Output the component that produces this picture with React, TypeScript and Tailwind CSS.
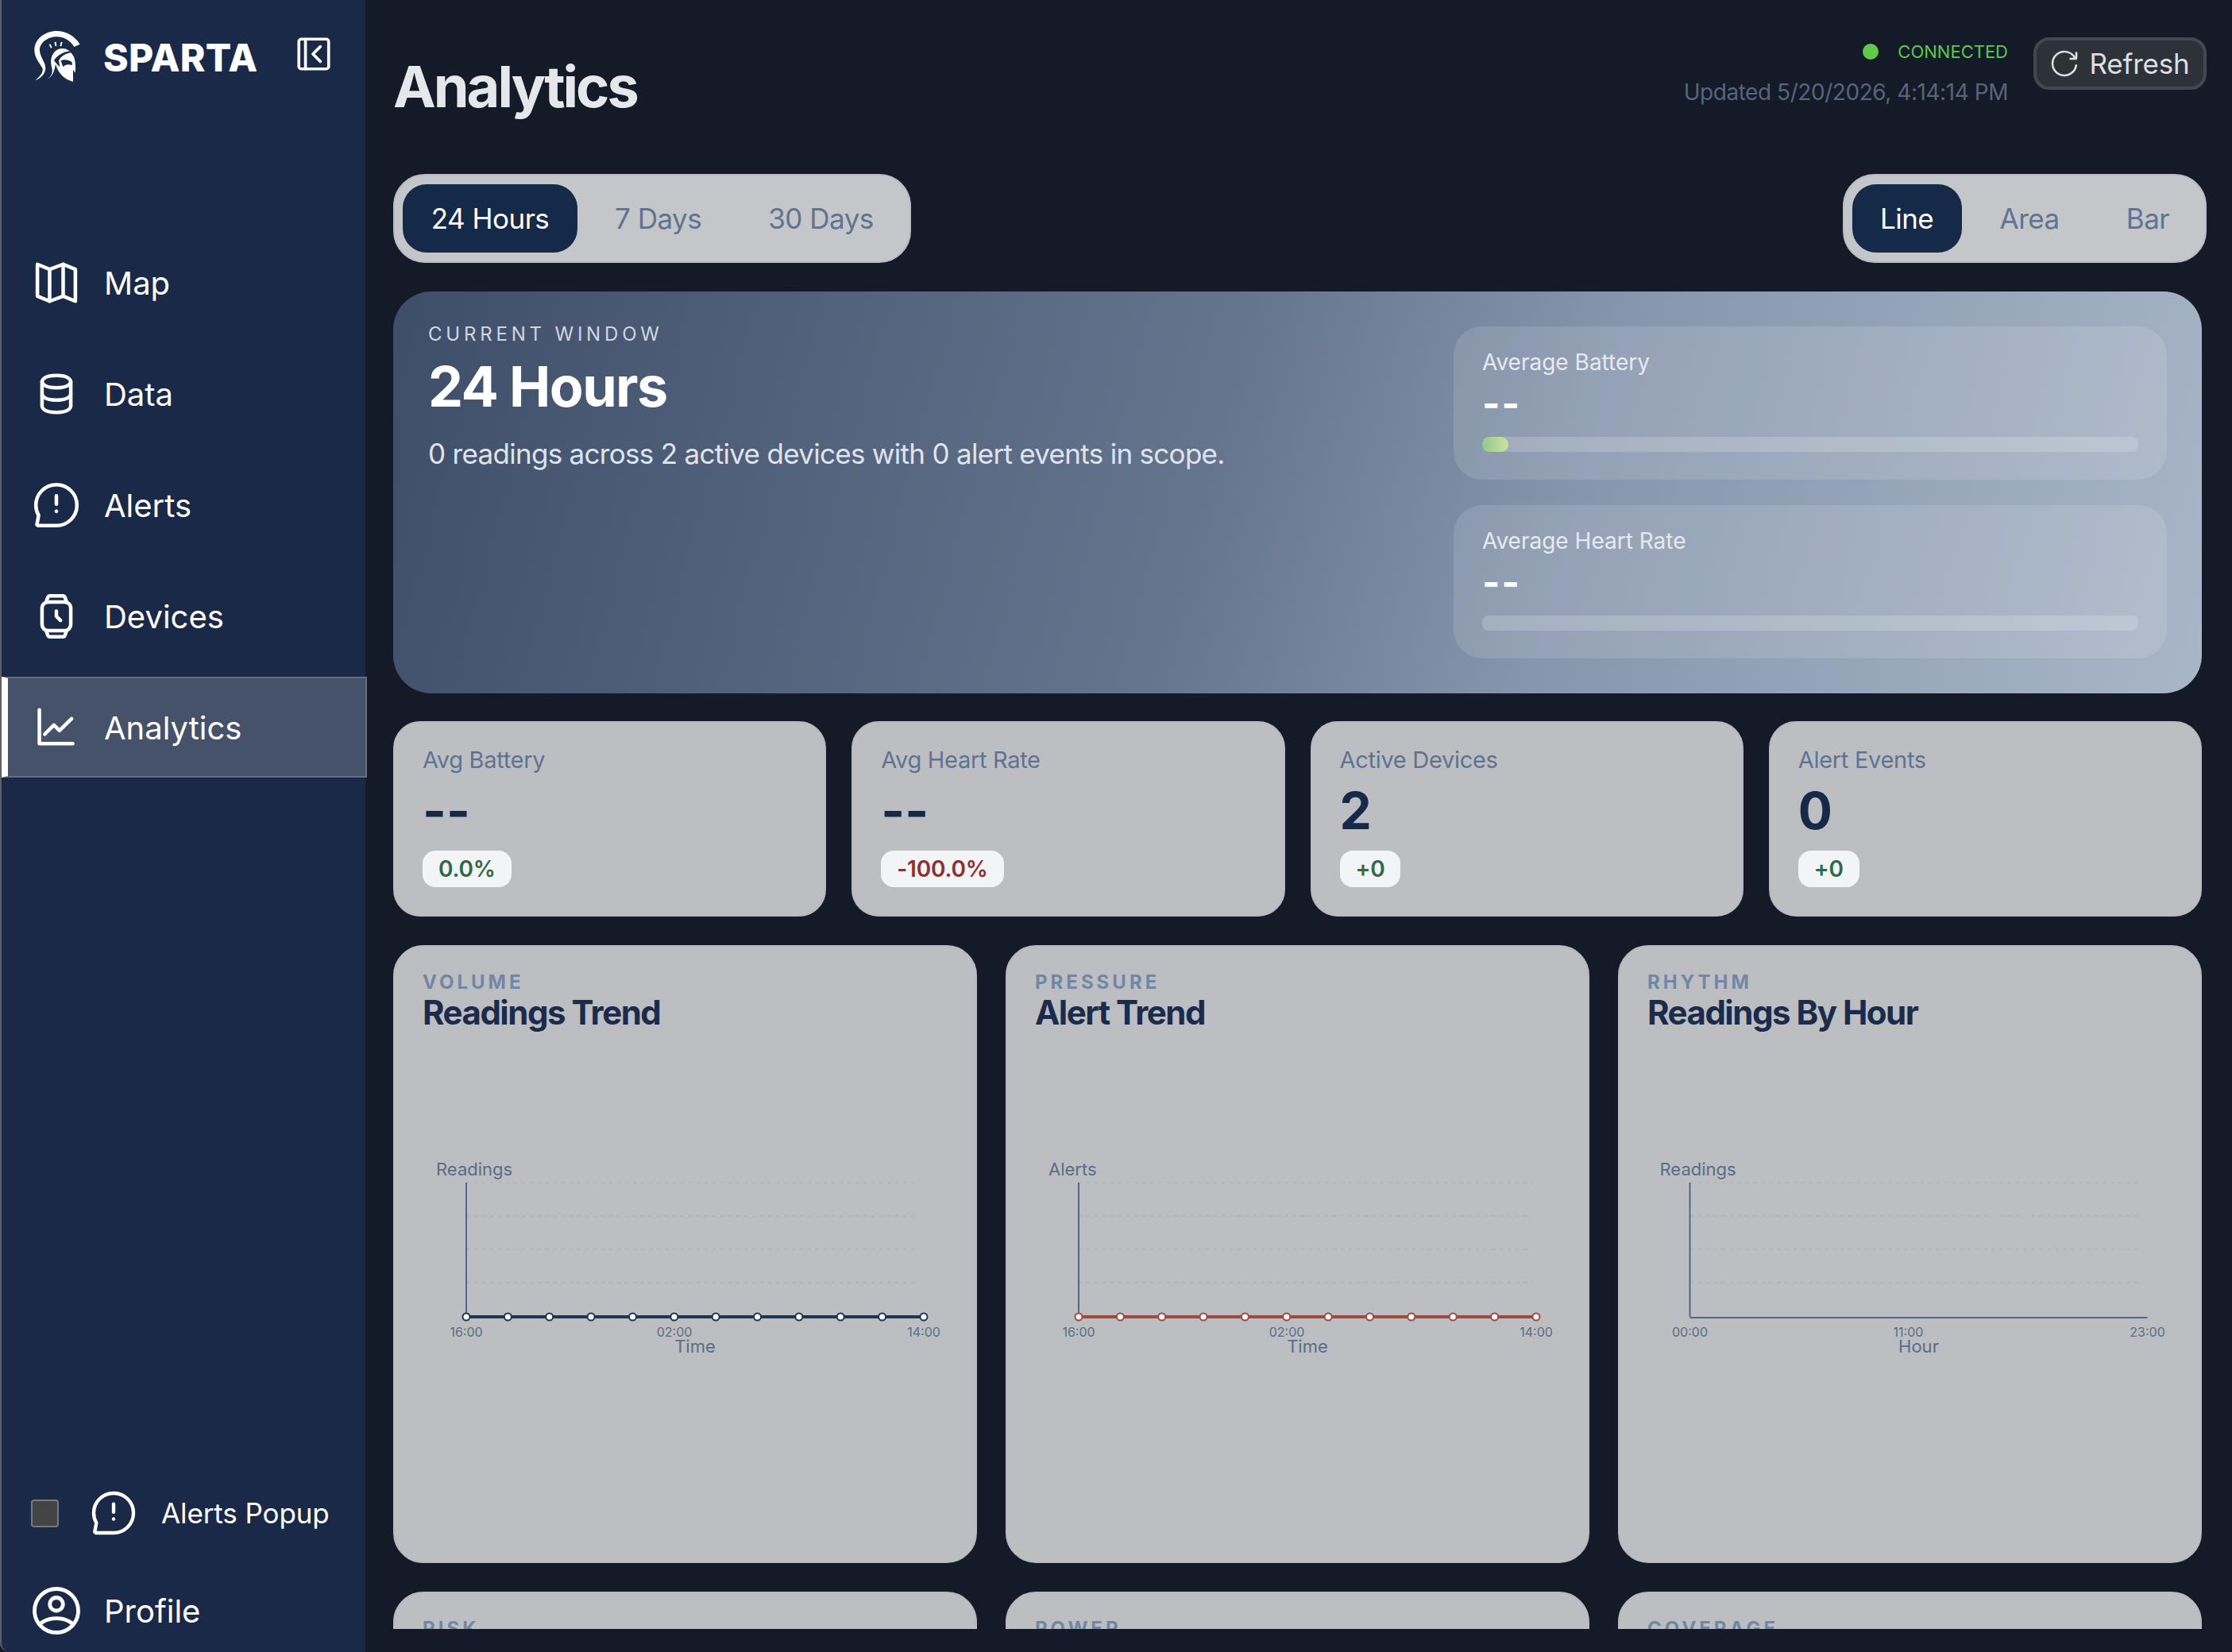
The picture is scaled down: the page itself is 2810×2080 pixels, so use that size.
import React from "react";

const Stroke = ({ className, children }: { className: string; children: React.ReactNode }) => (
  <svg viewBox="0 0 24 24" fill="none" stroke="currentColor" strokeWidth={1.75} strokeLinecap="round" strokeLinejoin="round" className={className}>
    {children}
  </svg>
);

const MapIcon = () => (
  <Stroke className="w-[62px] h-[62px]">
    <path d="M2.75 3L8.7 5.5L15.3 3L21.25 5.5V21L15.3 18.5L8.7 21L2.75 18.5Z" />
    <path d="M8.7 5.5V21M15.3 3V18.5" />
  </Stroke>
);
const DataIcon = () => (
  <Stroke className="w-[62px] h-[62px]">
    <path d="M5 12v6s0 3 7 3 7-3 7-3v-6" />
    <path d="M5 6v6s0 3 7 3 7-3 7-3V6" />
    <path d="M12 3c7 0 7 3 7 3s0 3-7 3-7-3-7-3 0-3 7-3z" />
  </Stroke>
);
const AlertIcon = ({ className }: { className: string }) => (
  <Stroke className={className}>
    <path d="M12 7.5v4M12 15.01l.01-.011" />
    <path d="M12 22c5.523 0 10-4.477 10-10S17.523 2 12 2 2 6.477 2 12c0 1.821.487 3.53 1.338 5L2.5 21.5l.6.5H12z" />
  </Stroke>
);
const WatchIcon = () => (
  <Stroke className="w-[62px] h-[62px]">
    <path d="M8 5h8a3 3 0 013 3v8a3 3 0 01-3 3H8a3 3 0 01-3-3V8a3 3 0 013-3z" />
    <path d="M7 5l.8-2.2A1.2 1.2 0 018.9 2h6.2a1.2 1.2 0 011.1.8L17 5" />
    <path d="M7 19l.8 2.2a1.2 1.2 0 001.1.8h6.2a1.2 1.2 0 001.1-.8L17 19" />
    <path d="M12 9.5V12l2 2" />
  </Stroke>
);
const GraphIcon = () => (
  <Stroke className="w-[62px] h-[62px]">
    <path d="M3.7 3.4V19.8H20" />
    <path d="M6.3 15.3L10.8 10.8L13.5 13.5L19.4 7.7" />
  </Stroke>
);
const ProfileIcon = () => (
  <Stroke className="w-[66px] h-[66px]">
    <path d="M12 2C6.477 2 2 6.477 2 12s4.477 10 10 10 10-4.477 10-10S17.523 2 12 2z" />
    <path d="M4.271 18.346S6.5 15.5 12 15.5s7.73 2.846 7.73 2.846" />
    <path d="M12 12a3 3 0 100-6 3 3 0 000 6z" />
  </Stroke>
);

const Logo = () => (
  <svg viewBox="0 0 172 192" fill="white" className="w-[58px] h-[64px] shrink-0">
    <path d="M172 50C150 15 115 0 85 0C40 0 0 30 0 72C0 100 18 120 30 140C36 155 20 172 3 187C25 178 42 160 42 140C42 118 22 100 20 75C18 45 50 22 85 22C110 22 135 35 150 60Z" />
    <path d="M48 182C64 172 70 158 66 140C58 116 62 84 88 70C112 58 138 72 150 100C156 120 156 140 154 158L146 146L146 192C130 186 116 180 106 170C92 156 84 140 80 125C76 148 70 172 48 182Z" />
    <path fill="#1a2947" d="M74 110C92 88 112 78 136 76L138 82C116 86 100 96 92 112L96 136C88 128 80 120 74 110Z" />
    <path fill="#1a2947" d="M100 112C112 106 128 108 142 118L142 130C128 124 116 128 108 136Z" />
    <path d="M55 52L62 65L67 62L60 49ZM76 42L78 57L84 57L82 41ZM100 41L96 57L102 58L106 42Z" />
  </svg>
);

const NavItem = ({ icon, label, active }: { icon: React.ReactNode; label: string; active?: boolean }) => (
  <div
    className={
      active
        ? "flex items-center h-[127px] -mr-[2px] pl-[30px] gap-[29px] text-[40px] text-white bg-[#46516a] border-y-2 border-r-2 border-l-8 border-y-[#636d82] border-r-[#636d82] border-l-white"
        : "flex items-center h-[127px] pl-[38px] gap-[29px] text-[40px] text-white"
    }
  >
    {icon}
    <span className="mt-[3px]">{label}</span>
  </div>
);

const Segmented = ({ items, activeW, first, second }: { items: string[]; activeW: string; first: string; second: string }) => (
  <div className="flex items-center h-[112px] pl-[10px] rounded-[40px] bg-[#c4c6ca] border-2 border-[#b8bcc3]">
    <div className={`flex items-center justify-center h-[86px] rounded-[30px] bg-[#152a48] text-white text-[35px] tracking-[-0.5px] ${activeW}`}>{items[0]}</div>
    <div className={`text-[35px] tracking-[-0.5px] text-[#5f7492] ${first}`}>{items[1]}</div>
    <div className={`text-[35px] tracking-[-0.5px] text-[#5f7492] mr-[45px] ${second}`}>{items[2]}</div>
  </div>
);

const Dashes = ({ className }: { className: string }) => <div className={`font-bold ${className}`}>--</div>;

const HeroPanel = ({ label, fill }: { label: string; fill?: boolean }) => (
  <div className="h-[193px] rounded-[36px] bg-white/[0.12] px-[36px] pt-[28px]">
    <div className="text-[28px] leading-[34px] text-[#e6eaf0]">{label}</div>
    <Dashes className="text-[48px] leading-[46px] mt-[12px] text-white tracking-[2px]" />
    <div className="h-[19px] mt-[19px] rounded-[8px] bg-white/[0.18] overflow-hidden">
      {fill && <div className="h-full w-[33px] rounded-[10px] bg-gradient-to-r from-[#8fca8e] to-[#cfe2a2]" />}
    </div>
  </div>
);

const Stat = ({ label, value, badge, tone }: { label: string; value: string; badge: string; tone: string }) => (
  <div className="h-[246px] rounded-[34px] bg-[#bdbec2] border-2 border-[#b6b9c0] px-[35px] pt-[30px]">
    <div className="text-[29px] tracking-[-0.3px] leading-[34px] text-[#5f7391]">{label}</div>
    <div className="h-[72px] mt-[11px] flex items-center text-[64px] leading-[72px] font-bold text-[#152a48]">{value}</div>
    <div className="mt-[14px]">
      <span className={`inline-flex items-center h-[46px] px-[20px] rounded-[16px] bg-[#f3f4f6] text-[28px] tracking-[-0.2px] font-semibold ${tone}`}>{badge}</span>
    </div>
  </div>
);

type ChartProps = {
  eyebrow: string;
  title: string;
  yLabel: string;
  xAxisTitle: string;
  ticks: string[];
  midAt: number;
  lineColor?: string;
  viewBox?: string;
};

const dots = Array.from({ length: 12 }, (_, i) => 92 + i * 52.36);
const tickFill = "#5a6c88";

const ChartCard = ({ eyebrow, title, yLabel, xAxisTitle, ticks, midAt, lineColor, viewBox = "2 120 731 654" }: ChartProps) => (
  <div className="h-[778px] rounded-[38px] bg-[#bdbec2] border-2 border-[#b6b9c0] overflow-hidden">
    <div className="h-[118px] px-[35px] pt-[32px]">
      <div className="text-[24px] leading-[26px] font-bold tracking-[4px] text-[#7287a6]">{eyebrow}</div>
      <div className="text-[42px] leading-[50px] font-bold text-[#1a2b4b] tracking-[-1.5px]">{title}</div>
    </div>
    <svg viewBox={viewBox} className="block w-[731px] h-[654px]" fontFamily="Inter, sans-serif">
      {[299, 341, 383, 425].map((y) => (
        <line key={y} x1={92} x2={663} y1={y} y2={y} stroke="#aeb2b9" strokeWidth={1.5} strokeDasharray="4 6" />
      ))}
      <line x1={92} x2={92} y1={299} y2={468} stroke="#52688a" strokeWidth={2} />
      <line x1={92} x2={668} y1={469} y2={469} stroke="#52688a" strokeWidth={2} />
      {lineColor && (
        <>
          <line x1={92} x2={668} y1={468} y2={468} stroke={lineColor} strokeWidth={4} />
          {dots.map((x) => (
            <circle key={x} cx={x} cy={468} r={4.5} fill="white" stroke={lineColor} strokeWidth={2} />
          ))}
        </>
      )}
      <text x={54} y={290} fontSize={22} fill={tickFill}>
        {yLabel}
      </text>
      <text x={92} y={493} fontSize={16} fill={tickFill} textAnchor="middle">
        {ticks[0]}
      </text>
      <text x={midAt} y={493} fontSize={16} fill={tickFill} textAnchor="middle">
        {ticks[1]}
      </text>
      <text x={668} y={493} fontSize={16} fill={tickFill} textAnchor="middle">
        {ticks[2]}
      </text>
      <text x={380} y={513} fontSize={22} fill={tickFill} textAnchor="middle">
        {xAxisTitle}
      </text>
    </svg>
  </div>
);

const PeekCard = ({ eyebrow }: { eyebrow: string }) => (
  <div className="h-[778px] rounded-[38px] bg-[#bdbec2] border-2 border-[#b6b9c0] px-[35px] pt-[32px]">
    <div className="text-[24px] leading-[26px] font-bold tracking-[4px] text-[#7287a6]">{eyebrow}</div>
  </div>
);

export default function App() {
  return (
    <div className="flex w-[2810px] h-[2080px] overflow-hidden bg-[#141a27] font-['Inter',sans-serif]">
      <aside className="flex flex-col w-[460px] shrink-0 h-full bg-[#1a2947] border-l-2 border-[#5e6066] rounded-bl-[12px]">
        <div className="h-[292px] shrink-0 flex items-start pl-[41px] pt-[39px]">
          <Logo />
          <div className="ml-[29px] mt-[6px] text-[48px] leading-[56px] font-extrabold text-white tracking-[0.3px]">SPARTA</div>
          <Stroke className="ml-[46px] mt-[4px] w-[50px] h-[50px] text-white">
            <path d="M19.5 21a1.5 1.5 0 001.5-1.5v-15A1.5 1.5 0 0019.5 3h-15A1.5 1.5 0 003 4.5v15A1.5 1.5 0 004.5 21h15z" />
            <path d="M7 3v18M16 7.5l-4.5 4.5 4.5 4.5" />
          </Stroke>
        </div>
        <nav className="flex flex-col gap-[13px]">
          <NavItem icon={<MapIcon />} label="Map" />
          <NavItem icon={<DataIcon />} label="Data" />
          <NavItem icon={<AlertIcon className="w-[62px] h-[62px]" />} label="Alerts" />
          <NavItem icon={<WatchIcon />} label="Devices" />
          <NavItem icon={<GraphIcon />} label="Analytics" active />
        </nav>
        <div className="mt-auto flex items-center pl-[37px] pb-[60px]">
          <div className="w-[35px] h-[35px] rounded-[4px] bg-[#444444] border-2 border-[#77797e]" />
          <div className="ml-[39px] text-white">
            <AlertIcon className="w-[60px] h-[60px]" />
          </div>
          <span className="ml-[30px] text-[35px] tracking-[-0.1px] text-white">Alerts Popup</span>
        </div>
        <div className="flex items-center pl-[36px] pb-[19px] gap-[27px] text-[40px] text-white">
          <ProfileIcon />
          <span className="mt-[2px]">Profile</span>
        </div>
      </aside>

      <main className="flex-1 min-w-0 h-full">
        <div className="h-[2051px] overflow-hidden pl-[35px] pr-[38px]">
          <header className="h-[219px] flex justify-between">
            <h1 className="mt-[65px] text-[72px] leading-[88px] font-bold tracking-[-3px] text-[#e5e7eb]">Analytics</h1>
            <div className="flex items-start">
              <div className="mt-[49px] flex flex-col items-end">
                <div className="flex items-center text-[22px] leading-[32px] text-[#5bc94a] mr-[1px]">
                  <span className="w-[20px] h-[20px] rounded-full bg-[#5fc94a]" />
                  <span className="ml-[24px]">CONNECTED</span>
                </div>
                <div className="mt-[18px] mr-[1px] text-[28px] leading-[34px] text-[#55657e] tracking-[-0.45px]">Updated 5/20/2026, 4:14:14 PM</div>
              </div>
              <div className="ml-[31px] mt-[47px] mr-[-6px] flex items-center gap-[13px] h-[66px] w-[218px] justify-center rounded-[20px] bg-[#2d3138] border-4 border-[#434750] text-[35px] tracking-[-0.2px] text-[#dcdee2]">
                <Stroke className="w-[36px] h-[36px] shrink-0">
                  <path d="M21.888 13.5C21.164 18.311 17.013 22 12 22 6.477 22 2 17.523 2 12S6.477 2 12 2c4.1 0 7.625 2.468 9.168 6" />
                  <path d="M17 8h4.4a.6.6 0 00.6-.6V3" />
                </Stroke>
                <span>Refresh</span>
              </div>
            </div>
          </header>

          <div className="flex justify-between mr-[-6px]">
            <Segmented items={["24 Hours", "7 Days", "30 Days"]} activeW="w-[220px]" first="ml-[47px]" second="ml-[84px]" />
            <Segmented items={["Line", "Area", "Bar"]} activeW="w-[138px]" first="ml-[48px]" second="ml-[84px]" />
          </div>

          <section className="mt-[36px] h-[506px] rounded-[48px] p-[44px] flex justify-between bg-[linear-gradient(105deg,#3f4e68_0%,#66758e_45%,#8796ad_65%,#a9b6c8_100%)]">
            <div className="-mt-[6px]">
              <div className="text-[24px] leading-[32px] tracking-[0.2em] text-[#cfd6e2]">CURRENT WINDOW</div>
              <div className="mt-[8px] text-[70px] leading-[84px] font-bold text-white tracking-[-1.6px]">24 Hours</div>
              <div className="mt-[20px] text-[35px] leading-[44px] tracking-[-0.7px] text-[#dfe4ec]">0 readings across 2 active devices with 0 alert events in scope.</div>
            </div>
            <div className="w-[898px] shrink-0 flex flex-col gap-[32px]">
              <HeroPanel label="Average Battery" fill />
              <HeroPanel label="Average Heart Rate" />
            </div>
          </section>

          <section className="mt-[35px] grid grid-cols-4 gap-[32px]">
            <Stat label="Avg Battery" value="--" badge="0.0%" tone="text-[#2d6a4a]" />
            <Stat label="Avg Heart Rate" value="--" badge="-100.0%" tone="text-[#8f2f30]" />
            <Stat label="Active Devices" value="2" badge="+0" tone="text-[#2d6a4a]" />
            <Stat label="Alert Events" value="0" badge="+0" tone="text-[#2d6a4a]" />
          </section>

          <section className="mt-[36px] grid grid-cols-3 gap-[36px]">
            <ChartCard eyebrow="VOLUME" title="Readings Trend" yLabel="Readings" xAxisTitle="Time" ticks={["16:00", "02:00", "14:00"]} midAt={354} lineColor="#1f3556" />
            <ChartCard eyebrow="PRESSURE" title="Alert Trend" yLabel="Alerts" xAxisTitle="Time" ticks={["16:00", "02:00", "14:00"]} midAt={354} lineColor="#a04a3e" />
            <ChartCard eyebrow="RHYTHM" title="Readings By Hour" yLabel="Readings" xAxisTitle="Hour" ticks={["00:00", "11:00", "23:00"]} midAt={367} viewBox="3.5 120 731 654" />
            <PeekCard eyebrow="RISK" />
            <PeekCard eyebrow="POWER" />
            <PeekCard eyebrow="COVERAGE" />
          </section>
        </div>
      </main>
    </div>
  );
}
